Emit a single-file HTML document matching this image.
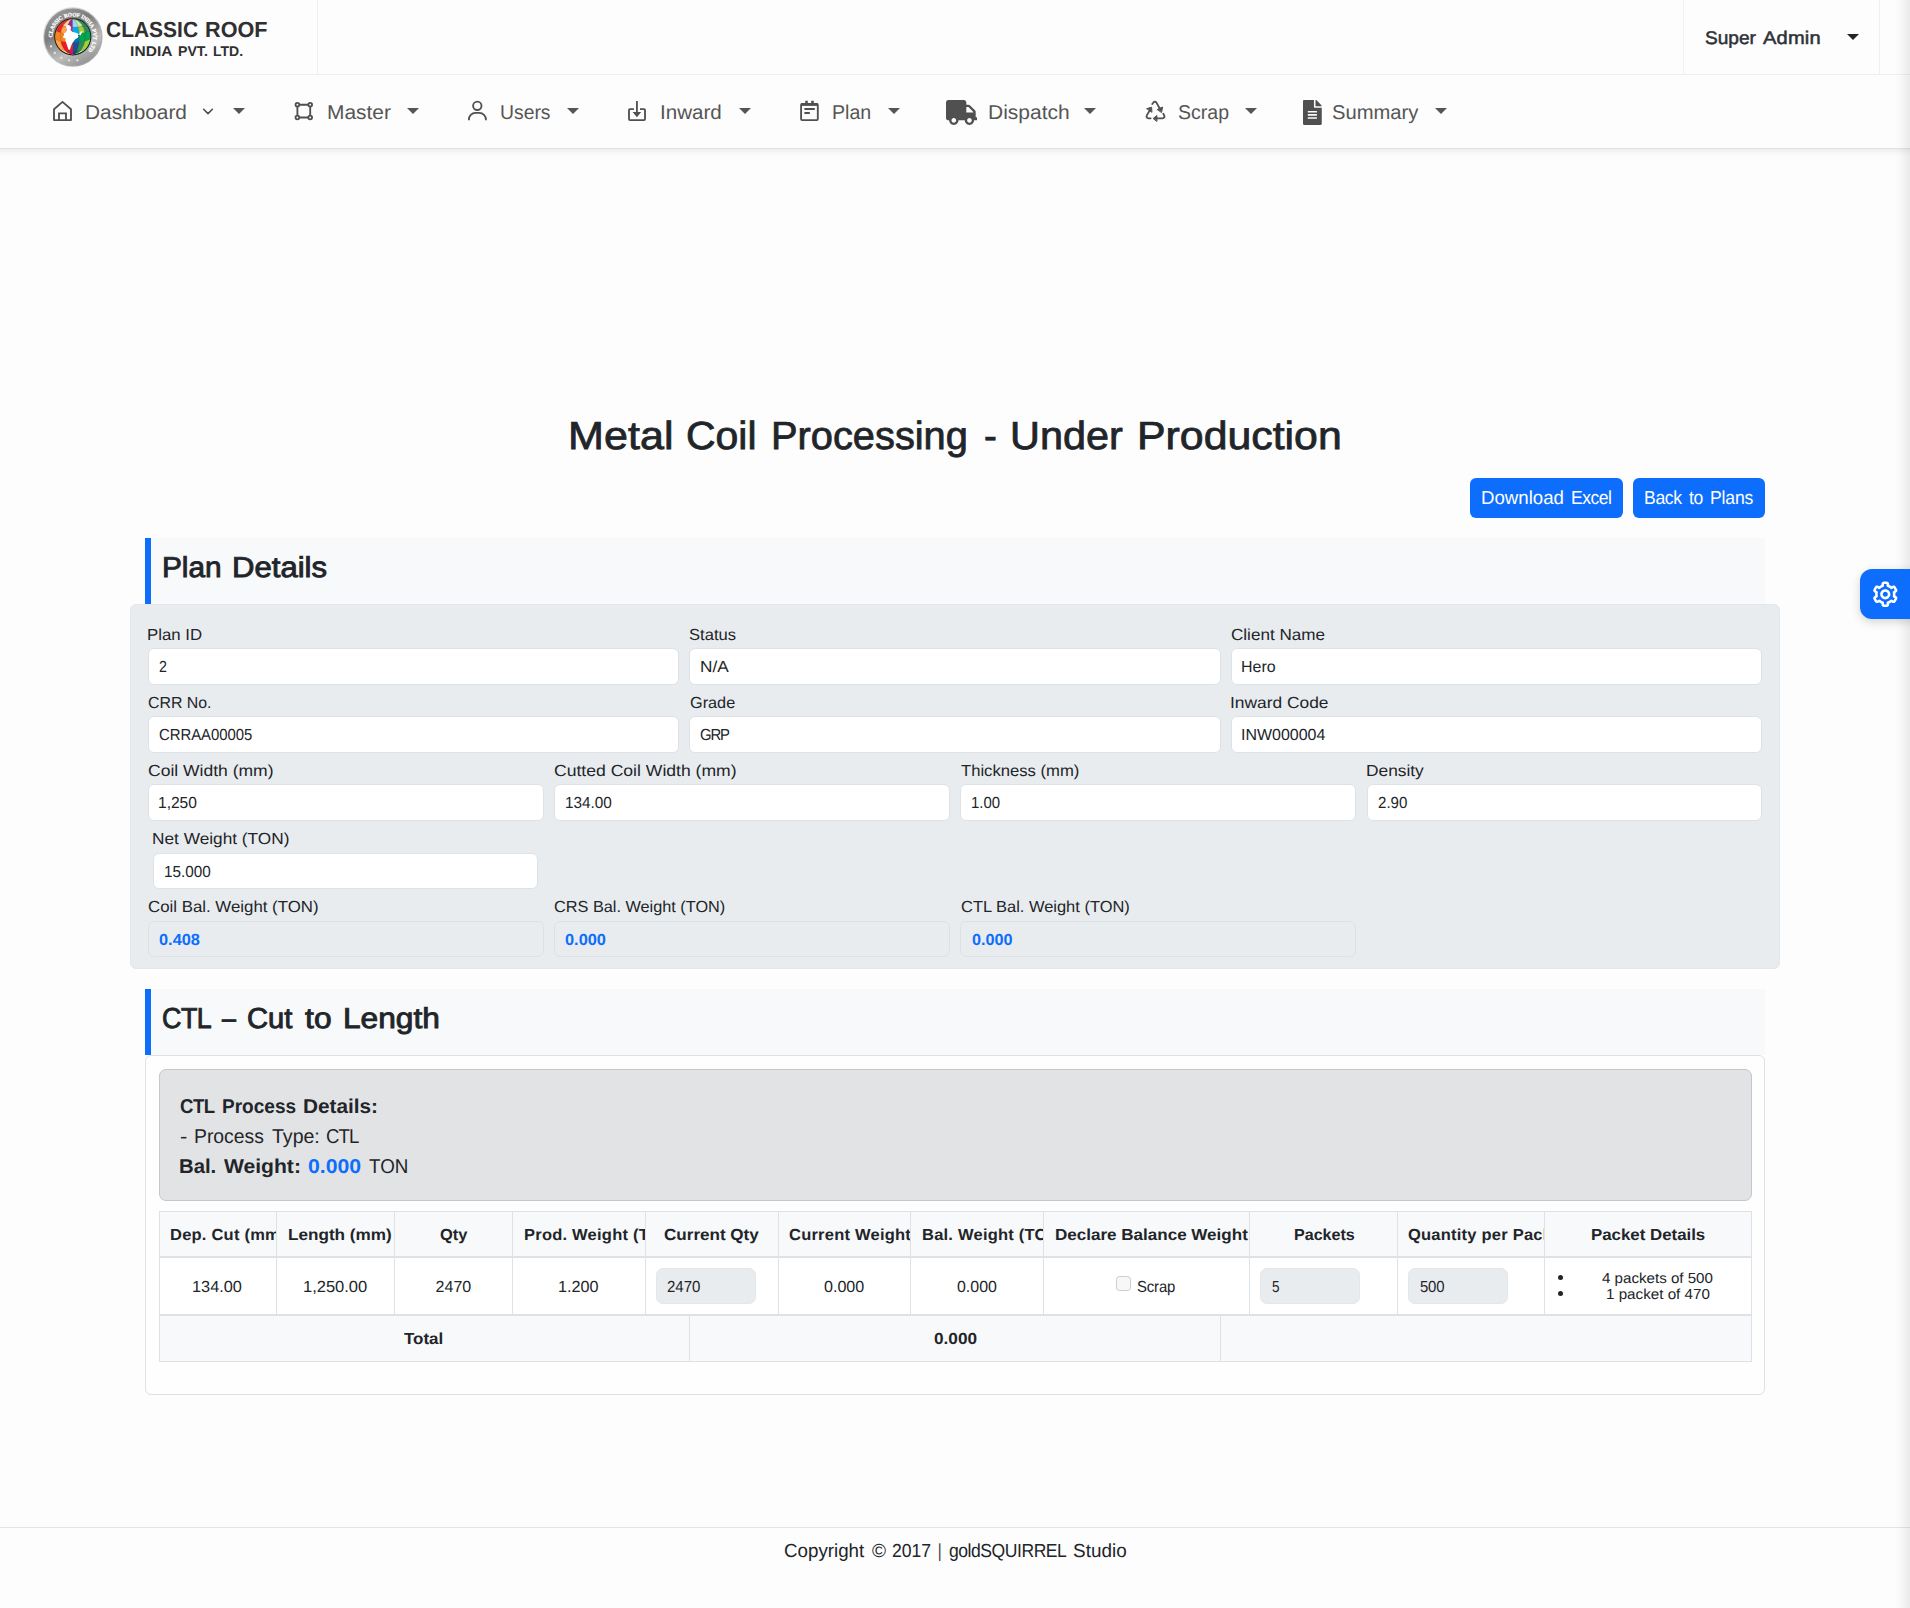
<!DOCTYPE html>
<html lang="en">
<head>
<meta charset="utf-8">
<title>Metal Coil Processing - Under Production</title>
<style>
*{box-sizing:border-box;margin:0;padding:0}
html,body{width:1910px;height:1608px;overflow:hidden;background:#fdfdfd}
body{font-family:"Liberation Sans",sans-serif;color:#212529;position:relative;font-size:15px}
.abs{position:absolute}
.t{position:absolute;white-space:pre;line-height:1;transform-origin:0 0;text-rendering:geometricPrecision}
#topbar{left:0;top:0;width:1910px;height:75px;border-bottom:1px solid #efefef;background:#fdfdfd}
#logoBox{left:0;top:0;width:318px;height:74px;border-right:1px solid #f0f0f0}
#adminBox{left:1683px;top:0;width:197px;height:74px;border-left:1px solid #f0f0f0;border-right:1px solid #f0f0f0}
#nav{left:0;top:75px;width:1910px;height:74px;background:#fdfdfd;border-bottom:1px solid #e2e2e2}
#navsh{left:0;top:149px;width:1910px;height:8px;background:linear-gradient(to bottom,rgba(0,0,0,.055),rgba(0,0,0,.04) 25%,rgba(0,0,0,.015) 60%,rgba(0,0,0,0))}
.caret{position:absolute;width:0;height:0;border-left:6px solid transparent;border-right:6px solid transparent;border-top:6px solid #555;top:108px}
.sechead{left:145px;width:1620px;height:66px;background:#f8f9fa;border-left:6px solid #0d6efd}
.btn{position:absolute;top:478px;height:40px;background:#0d6efd;border-radius:6px}
#panel{left:130px;top:604px;width:1650px;height:365px;background:#e9ecef;border:1px solid #e3e6ea;border-radius:6px}
.inp{position:absolute;height:37px;background:#fff;border:1px solid #dee2e6;border-radius:6px}
.inp.ro{background:#e9ecef;border-color:#dde1e5}
#card{left:145px;top:1055px;width:1620px;height:340px;border:1px solid #dee2e6;border-radius:6px;background:#fefefe}
#alert{left:159px;top:1069px;width:1593px;height:132px;background:#e2e3e5;border:1px solid #c4c8cb;border-radius:7px}
.cell{position:absolute;border-left:1px solid #dee2e6;border-top:1px solid #dee2e6}
.sin{position:absolute;top:1268px;height:36px;width:100px;background:#e9ecef;border:1px solid #e3e6ea;border-radius:7px}
#footer{left:0;top:1527px;width:1910px;height:81px;border-top:1px solid #e4e4e4;background:#fdfdfd}
#gear{left:1860px;top:569px;width:60px;height:50px;background:#0d6efd;border-radius:12px 0 0 12px;box-shadow:0 3px 10px rgba(0,0,0,.17)}
#edge{left:1894px;top:0;width:16px;height:1608px;background:linear-gradient(to right,rgba(0,0,0,0),rgba(0,0,0,.02) 40%,rgba(0,0,0,.075))}
.bul{position:absolute;width:5.6px;height:5.6px;border-radius:50%;background:#212529}

</style>
</head>
<body>
<div id="topbar" class="abs"></div>
<div id="logoBox" class="abs"></div>
<div id="adminBox" class="abs"></div>
<div id="nav" class="abs"></div>
<div id="navsh" class="abs"></div>
<div class="caret" style="left:232.7px"></div>
<div class="caret" style="left:406.8px"></div>
<div class="caret" style="left:566.9px"></div>
<div class="caret" style="left:738.7px"></div>
<div class="caret" style="left:887.8px"></div>
<div class="caret" style="left:1084.1px"></div>
<div class="caret" style="left:1245px"></div>
<div class="caret" style="left:1435.1px"></div>
<div class="caret" style="left:1847px;top:34px;border-top-color:#212529"></div>
<div class="btn" style="left:1470px;width:153px"></div>
<div class="btn" style="left:1633px;width:132px"></div>
<div class="abs sechead" style="top:538px"></div>
<div id="panel" class="abs"></div>
<div class="inp" style="left:148px;top:648px;width:531px"></div>
<div class="inp" style="left:689px;top:648px;width:532px"></div>
<div class="inp" style="left:1231px;top:648px;width:531px"></div>
<div class="inp" style="left:148px;top:716px;width:531px"></div>
<div class="inp" style="left:689px;top:716px;width:532px"></div>
<div class="inp" style="left:1231px;top:716px;width:531px"></div>
<div class="inp" style="left:148px;top:784px;width:396px"></div>
<div class="inp" style="left:554px;top:784px;width:396px"></div>
<div class="inp" style="left:960px;top:784px;width:396px"></div>
<div class="inp" style="left:1367px;top:784px;width:395px"></div>
<div class="inp" style="left:153px;top:853px;width:385px;height:36px"></div>
<div class="inp ro" style="left:148px;top:921px;width:396px;height:36px"></div>
<div class="inp ro" style="left:554px;top:921px;width:396px;height:36px"></div>
<div class="inp ro" style="left:960px;top:921px;width:396px;height:36px"></div>
<div class="abs sechead" style="top:989px"></div>
<div id="card" class="abs"></div>
<div id="alert" class="abs"></div>
<div class="abs" style="left:159px;top:1211px;width:1593px;height:151px;background:#dee2e6"></div>
<div class="abs" style="left:160px;top:1212px;width:116px;height:44px;background:#f8f9fa"></div>
<div class="abs" style="left:160px;top:1258px;width:116px;height:56px;background:#fff"></div>
<div class="abs" style="left:277px;top:1212px;width:117px;height:44px;background:#f8f9fa"></div>
<div class="abs" style="left:277px;top:1258px;width:117px;height:56px;background:#fff"></div>
<div class="abs" style="left:395px;top:1212px;width:117px;height:44px;background:#f8f9fa"></div>
<div class="abs" style="left:395px;top:1258px;width:117px;height:56px;background:#fff"></div>
<div class="abs" style="left:513px;top:1212px;width:132px;height:44px;background:#f8f9fa"></div>
<div class="abs" style="left:513px;top:1258px;width:132px;height:56px;background:#fff"></div>
<div class="abs" style="left:646px;top:1212px;width:132px;height:44px;background:#f8f9fa"></div>
<div class="abs" style="left:646px;top:1258px;width:132px;height:56px;background:#fff"></div>
<div class="abs" style="left:779px;top:1212px;width:131px;height:44px;background:#f8f9fa"></div>
<div class="abs" style="left:779px;top:1258px;width:131px;height:56px;background:#fff"></div>
<div class="abs" style="left:911px;top:1212px;width:132px;height:44px;background:#f8f9fa"></div>
<div class="abs" style="left:911px;top:1258px;width:132px;height:56px;background:#fff"></div>
<div class="abs" style="left:1044px;top:1212px;width:205px;height:44px;background:#f8f9fa"></div>
<div class="abs" style="left:1044px;top:1258px;width:205px;height:56px;background:#fff"></div>
<div class="abs" style="left:1250px;top:1212px;width:147px;height:44px;background:#f8f9fa"></div>
<div class="abs" style="left:1250px;top:1258px;width:147px;height:56px;background:#fff"></div>
<div class="abs" style="left:1398px;top:1212px;width:146px;height:44px;background:#f8f9fa"></div>
<div class="abs" style="left:1398px;top:1258px;width:146px;height:56px;background:#fff"></div>
<div class="abs" style="left:1545px;top:1212px;width:206px;height:44px;background:#f8f9fa"></div>
<div class="abs" style="left:1545px;top:1258px;width:206px;height:56px;background:#fff"></div>
<div class="abs" style="left:160px;top:1316px;width:529px;height:45px;background:#f8f9fa"></div>
<div class="abs" style="left:690px;top:1316px;width:530px;height:45px;background:#f8f9fa"></div>
<div class="abs" style="left:1221px;top:1316px;width:530px;height:45px;background:#f8f9fa"></div>
<div class="sin" style="left:656.2px"></div>
<div class="sin" style="left:1260.2px"></div>
<div class="sin" style="left:1408px"></div>
<div class="abs" style="left:1116px;top:1276px;width:15px;height:15px;border:1px solid #cdcdcd;border-radius:3.5px;background:#f7f7f7"></div>
<div class="bul" style="left:1557.7px;top:1274.8px"></div><div class="bul" style="left:1557.7px;top:1290.7px"></div>
<div id="footer" class="abs"></div>
<div id="edge" class="abs"></div>
<div id="gear" class="abs"></div>

<svg class="abs" style="left:43px;top:7px" width="60" height="60" viewBox="0 0 60 60">
<defs>
<linearGradient id="lg1" x1="0.2" y1="0" x2="0.75" y2="1"><stop offset="0" stop-color="#9a9a9a"/><stop offset=".35" stop-color="#7c7c7c"/><stop offset=".7" stop-color="#bdbdbd"/><stop offset="1" stop-color="#8e8e8e"/></linearGradient>
<linearGradient id="lg2" x1="0" y1="0" x2="1" y2="1"><stop offset="0" stop-color="#e6e6e6"/><stop offset="1" stop-color="#9c9c9c"/></linearGradient>
<clipPath id="gc"><circle cx="29.8" cy="29.8" r="17.6"/></clipPath>
<path id="arc" d="M 9.3 30.4 A 20.5 20.5 0 1 1 44.3 44.3"/>
</defs>
<circle cx="29.8" cy="30" r="29.8" fill="url(#lg2)"/>
<circle cx="29.8" cy="30" r="28.6" fill="url(#lg1)"/>
<circle cx="29.8" cy="29.8" r="18.6" fill="#1c1c1c"/>
<g clip-path="url(#gc)">
<rect x="10" y="10" width="20" height="40" fill="#f58220"/>
<rect x="30" y="10" width="20" height="40" fill="#00a651"/>
<defs>
<clipPath id="e0"><ellipse cx="29.8" cy="29.8" rx="17.6" ry="17.6"/></clipPath>
<clipPath id="e1"><ellipse cx="29.8" cy="29.8" rx="12.4" ry="17.6"/></clipPath>
<clipPath id="e2"><ellipse cx="29.8" cy="29.8" rx="6.5" ry="17.6"/></clipPath>
</defs>
<g clip-path="url(#e0)">
<path d="M11.8 4.6L13.6 5.2L15.4 5.8L17.2 6.3L19.0 6.8L20.8 7.1L22.6 7.5L24.4 7.7L26.2 7.9L28.0 8.0L29.8 8.0L29.8 20.3L28.0 20.3L26.2 20.2L24.4 20.0L22.6 19.8L20.8 19.4L19.0 19.1L17.2 18.6L15.4 18.1L13.6 17.5L11.8 16.9Z" fill="#e8262a"/>
<path d="M29.8 8.0L31.6 8.0L33.4 7.9L35.2 7.7L37.0 7.5L38.8 7.1L40.6 6.8L42.4 6.3L44.2 5.8L46.0 5.2L47.8 4.6L47.8 16.9L46.0 17.5L44.2 18.1L42.4 18.6L40.6 19.1L38.8 19.4L37.0 19.8L35.2 20.0L33.4 20.2L31.6 20.3L29.8 20.3Z" fill="#2e8b57"/>
<path d="M11.8 16.9L13.6 17.5L15.4 18.1L17.2 18.6L19.0 19.1L20.8 19.4L22.6 19.8L24.4 20.0L26.2 20.2L28.0 20.3L29.8 20.3L29.8 27.2L28.0 27.2L26.2 27.1L24.4 26.9L22.6 26.7L20.8 26.3L19.0 26.0L17.2 25.5L15.4 25.0L13.6 24.4L11.8 23.8Z" fill="#e8262a"/>
<path d="M29.8 20.3L31.6 20.3L33.4 20.2L35.2 20.0L37.0 19.8L38.8 19.4L40.6 19.1L42.4 18.6L44.2 18.1L46.0 17.5L47.8 16.9L47.8 23.8L46.0 24.4L44.2 25.0L42.4 25.5L40.6 26.0L38.8 26.3L37.0 26.7L35.2 26.9L33.4 27.1L31.6 27.2L29.8 27.2Z" fill="#2e8b57"/>
<path d="M11.8 23.8L13.6 24.4L15.4 25.0L17.2 25.5L19.0 26.0L20.8 26.3L22.6 26.7L24.4 26.9L26.2 27.1L28.0 27.2L29.8 27.2L29.8 35.6L28.0 35.6L26.2 35.5L24.4 35.3L22.6 35.1L20.8 34.7L19.0 34.4L17.2 33.9L15.4 33.4L13.6 32.8L11.8 32.2Z" fill="#f58220"/>
<path d="M29.8 27.2L31.6 27.2L33.4 27.1L35.2 26.9L37.0 26.7L38.8 26.3L40.6 26.0L42.4 25.5L44.2 25.0L46.0 24.4L47.8 23.8L47.8 32.2L46.0 32.8L44.2 33.4L42.4 33.9L40.6 34.4L38.8 34.7L37.0 35.1L35.2 35.3L33.4 35.5L31.6 35.6L29.8 35.6Z" fill="#00a651"/>
<path d="M11.8 32.2L13.6 32.8L15.4 33.4L17.2 33.9L19.0 34.4L20.8 34.7L22.6 35.1L24.4 35.3L26.2 35.5L28.0 35.6L29.8 35.6L29.8 44.2L28.0 44.2L26.2 44.1L24.4 43.9L22.6 43.7L20.8 43.3L19.0 43.0L17.2 42.5L15.4 42.0L13.6 41.4L11.8 40.8Z" fill="#f9a64a"/>
<path d="M29.8 35.6L31.6 35.6L33.4 35.5L35.2 35.3L37.0 35.1L38.8 34.7L40.6 34.4L42.4 33.9L44.2 33.4L46.0 32.8L47.8 32.2L47.8 40.8L46.0 41.4L44.2 42.0L42.4 42.5L40.6 43.0L38.8 43.3L37.0 43.7L35.2 43.9L33.4 44.1L31.6 44.2L29.8 44.2Z" fill="#a6ce39"/>
<path d="M11.8 40.8L13.6 41.4L15.4 42.0L17.2 42.5L19.0 43.0L20.8 43.3L22.6 43.7L24.4 43.9L26.2 44.1L28.0 44.2L29.8 44.2L29.8 54.0L28.0 54.0L26.2 53.9L24.4 53.7L22.6 53.5L20.8 53.1L19.0 52.8L17.2 52.3L15.4 51.8L13.6 51.2L11.8 50.6Z" fill="#fbd19b"/>
<path d="M29.8 44.2L31.6 44.2L33.4 44.1L35.2 43.9L37.0 43.7L38.8 43.3L40.6 43.0L42.4 42.5L44.2 42.0L46.0 41.4L47.8 40.8L47.8 50.6L46.0 51.2L44.2 51.8L42.4 52.3L40.6 52.8L38.8 53.1L37.0 53.5L35.2 53.7L33.4 53.9L31.6 54.0L29.8 54.0Z" fill="#cfe59a"/>
</g>
<g clip-path="url(#e1)">
<path d="M11.8 4.6L13.6 5.2L15.4 5.8L17.2 6.3L19.0 6.8L20.8 7.1L22.6 7.5L24.4 7.7L26.2 7.9L28.0 8.0L29.8 8.0L29.8 20.3L28.0 20.3L26.2 20.2L24.4 20.0L22.6 19.8L20.8 19.4L19.0 19.1L17.2 18.6L15.4 18.1L13.6 17.5L11.8 16.9Z" fill="#fcd5a4"/>
<path d="M29.8 8.0L31.6 8.0L33.4 7.9L35.2 7.7L37.0 7.5L38.8 7.1L40.6 6.8L42.4 6.3L44.2 5.8L46.0 5.2L47.8 4.6L47.8 16.9L46.0 17.5L44.2 18.1L42.4 18.6L40.6 19.1L38.8 19.4L37.0 19.8L35.2 20.0L33.4 20.2L31.6 20.3L29.8 20.3Z" fill="#cfe59a"/>
<path d="M11.8 16.9L13.6 17.5L15.4 18.1L17.2 18.6L19.0 19.1L20.8 19.4L22.6 19.8L24.4 20.0L26.2 20.2L28.0 20.3L29.8 20.3L29.8 27.2L28.0 27.2L26.2 27.1L24.4 26.9L22.6 26.7L20.8 26.3L19.0 26.0L17.2 25.5L15.4 25.0L13.6 24.4L11.8 23.8Z" fill="#f9a64a"/>
<path d="M29.8 20.3L31.6 20.3L33.4 20.2L35.2 20.0L37.0 19.8L38.8 19.4L40.6 19.1L42.4 18.6L44.2 18.1L46.0 17.5L47.8 16.9L47.8 23.8L46.0 24.4L44.2 25.0L42.4 25.5L40.6 26.0L38.8 26.3L37.0 26.7L35.2 26.9L33.4 27.1L31.6 27.2L29.8 27.2Z" fill="#a6ce39"/>
<path d="M11.8 23.8L13.6 24.4L15.4 25.0L17.2 25.5L19.0 26.0L20.8 26.3L22.6 26.7L24.4 26.9L26.2 27.1L28.0 27.2L29.8 27.2L29.8 35.6L28.0 35.6L26.2 35.5L24.4 35.3L22.6 35.1L20.8 34.7L19.0 34.4L17.2 33.9L15.4 33.4L13.6 32.8L11.8 32.2Z" fill="#f58220"/>
<path d="M29.8 27.2L31.6 27.2L33.4 27.1L35.2 26.9L37.0 26.7L38.8 26.3L40.6 26.0L42.4 25.5L44.2 25.0L46.0 24.4L47.8 23.8L47.8 32.2L46.0 32.8L44.2 33.4L42.4 33.9L40.6 34.4L38.8 34.7L37.0 35.1L35.2 35.3L33.4 35.5L31.6 35.6L29.8 35.6Z" fill="#00a651"/>
<path d="M11.8 32.2L13.6 32.8L15.4 33.4L17.2 33.9L19.0 34.4L20.8 34.7L22.6 35.1L24.4 35.3L26.2 35.5L28.0 35.6L29.8 35.6L29.8 44.2L28.0 44.2L26.2 44.1L24.4 43.9L22.6 43.7L20.8 43.3L19.0 43.0L17.2 42.5L15.4 42.0L13.6 41.4L11.8 40.8Z" fill="#ed1c24"/>
<path d="M29.8 35.6L31.6 35.6L33.4 35.5L35.2 35.3L37.0 35.1L38.8 34.7L40.6 34.4L42.4 33.9L44.2 33.4L46.0 32.8L47.8 32.2L47.8 40.8L46.0 41.4L44.2 42.0L42.4 42.5L40.6 43.0L38.8 43.3L37.0 43.7L35.2 43.9L33.4 44.1L31.6 44.2L29.8 44.2Z" fill="#2e8b57"/>
<path d="M11.8 40.8L13.6 41.4L15.4 42.0L17.2 42.5L19.0 43.0L20.8 43.3L22.6 43.7L24.4 43.9L26.2 44.1L28.0 44.2L29.8 44.2L29.8 54.0L28.0 54.0L26.2 53.9L24.4 53.7L22.6 53.5L20.8 53.1L19.0 52.8L17.2 52.3L15.4 51.8L13.6 51.2L11.8 50.6Z" fill="#c1272d"/>
<path d="M29.8 44.2L31.6 44.2L33.4 44.1L35.2 43.9L37.0 43.7L38.8 43.3L40.6 43.0L42.4 42.5L44.2 42.0L46.0 41.4L47.8 40.8L47.8 50.6L46.0 51.2L44.2 51.8L42.4 52.3L40.6 52.8L38.8 53.1L37.0 53.5L35.2 53.7L33.4 53.9L31.6 54.0L29.8 54.0Z" fill="#1f7a47"/>
</g>
<g clip-path="url(#e2)">
<path d="M11.8 4.6L13.6 5.2L15.4 5.8L17.2 6.3L19.0 6.8L20.8 7.1L22.6 7.5L24.4 7.7L26.2 7.9L28.0 8.0L29.8 8.0L29.8 20.3L28.0 20.3L26.2 20.2L24.4 20.0L22.6 19.8L20.8 19.4L19.0 19.1L17.2 18.6L15.4 18.1L13.6 17.5L11.8 16.9Z" fill="#92278f"/>
<path d="M29.8 8.0L31.6 8.0L33.4 7.9L35.2 7.7L37.0 7.5L38.8 7.1L40.6 6.8L42.4 6.3L44.2 5.8L46.0 5.2L47.8 4.6L47.8 16.9L46.0 17.5L44.2 18.1L42.4 18.6L40.6 19.1L38.8 19.4L37.0 19.8L35.2 20.0L33.4 20.2L31.6 20.3L29.8 20.3Z" fill="#8fd8f8"/>
<path d="M11.8 16.9L13.6 17.5L15.4 18.1L17.2 18.6L19.0 19.1L20.8 19.4L22.6 19.8L24.4 20.0L26.2 20.2L28.0 20.3L29.8 20.3L29.8 27.2L28.0 27.2L26.2 27.1L24.4 26.9L22.6 26.7L20.8 26.3L19.0 26.0L17.2 25.5L15.4 25.0L13.6 24.4L11.8 23.8Z" fill="#a8309a"/>
<path d="M29.8 20.3L31.6 20.3L33.4 20.2L35.2 20.0L37.0 19.8L38.8 19.4L40.6 19.1L42.4 18.6L44.2 18.1L46.0 17.5L47.8 16.9L47.8 23.8L46.0 24.4L44.2 25.0L42.4 25.5L40.6 26.0L38.8 26.3L37.0 26.7L35.2 26.9L33.4 27.1L31.6 27.2L29.8 27.2Z" fill="#00aeef"/>
<path d="M11.8 23.8L13.6 24.4L15.4 25.0L17.2 25.5L19.0 26.0L20.8 26.3L22.6 26.7L24.4 26.9L26.2 27.1L28.0 27.2L29.8 27.2L29.8 35.6L28.0 35.6L26.2 35.5L24.4 35.3L22.6 35.1L20.8 34.7L19.0 34.4L17.2 33.9L15.4 33.4L13.6 32.8L11.8 32.2Z" fill="#ffffff"/>
<path d="M29.8 27.2L31.6 27.2L33.4 27.1L35.2 26.9L37.0 26.7L38.8 26.3L40.6 26.0L42.4 25.5L44.2 25.0L46.0 24.4L47.8 23.8L47.8 32.2L46.0 32.8L44.2 33.4L42.4 33.9L40.6 34.4L38.8 34.7L37.0 35.1L35.2 35.3L33.4 35.5L31.6 35.6L29.8 35.6Z" fill="#0072bc"/>
<path d="M11.8 32.2L13.6 32.8L15.4 33.4L17.2 33.9L19.0 34.4L20.8 34.7L22.6 35.1L24.4 35.3L26.2 35.5L28.0 35.6L29.8 35.6L29.8 44.2L28.0 44.2L26.2 44.1L24.4 43.9L22.6 43.7L20.8 43.3L19.0 43.0L17.2 42.5L15.4 42.0L13.6 41.4L11.8 40.8Z" fill="#ed1c24"/>
<path d="M29.8 35.6L31.6 35.6L33.4 35.5L35.2 35.3L37.0 35.1L38.8 34.7L40.6 34.4L42.4 33.9L44.2 33.4L46.0 32.8L47.8 32.2L47.8 40.8L46.0 41.4L44.2 42.0L42.4 42.5L40.6 43.0L38.8 43.3L37.0 43.7L35.2 43.9L33.4 44.1L31.6 44.2L29.8 44.2Z" fill="#1b4f9c"/>
<path d="M11.8 40.8L13.6 41.4L15.4 42.0L17.2 42.5L19.0 43.0L20.8 43.3L22.6 43.7L24.4 43.9L26.2 44.1L28.0 44.2L29.8 44.2L29.8 54.0L28.0 54.0L26.2 53.9L24.4 53.7L22.6 53.5L20.8 53.1L19.0 52.8L17.2 52.3L15.4 51.8L13.6 51.2L11.8 50.6Z" fill="#ec008c"/>
<path d="M29.8 44.2L31.6 44.2L33.4 44.1L35.2 43.9L37.0 43.7L38.8 43.3L40.6 43.0L42.4 42.5L44.2 42.0L46.0 41.4L47.8 40.8L47.8 50.6L46.0 51.2L44.2 51.8L42.4 52.3L40.6 52.8L38.8 53.1L37.0 53.5L35.2 53.7L33.4 53.9L31.6 54.0L29.8 54.0Z" fill="#2e3192"/>
</g>
<ellipse cx="29.8" cy="29.8" rx="12.4" ry="17.6" fill="none" stroke="#3a2a1a" stroke-opacity=".45" stroke-width=".35"/>
<ellipse cx="29.8" cy="29.8" rx="6.5" ry="17.6" fill="none" stroke="#3a2a1a" stroke-opacity=".45" stroke-width=".35"/>
<path d="M11.8 16.9L13.6 17.5L15.4 18.1L17.2 18.6L19.0 19.1L20.8 19.4L22.6 19.8L24.4 20.0L26.2 20.2L28.0 20.3L29.8 20.3L31.6 20.3L33.4 20.2L35.2 20.0L37.0 19.8L38.8 19.4L40.6 19.1L42.4 18.6L44.2 18.1L46.0 17.5L47.8 16.9" fill="none" stroke="#3a2a1a" stroke-opacity=".45" stroke-width=".35"/>
<path d="M11.8 23.8L13.6 24.4L15.4 25.0L17.2 25.5L19.0 26.0L20.8 26.3L22.6 26.7L24.4 26.9L26.2 27.1L28.0 27.2L29.8 27.2L31.6 27.2L33.4 27.1L35.2 26.9L37.0 26.7L38.8 26.3L40.6 26.0L42.4 25.5L44.2 25.0L46.0 24.4L47.8 23.8" fill="none" stroke="#3a2a1a" stroke-opacity=".45" stroke-width=".35"/>
<path d="M11.8 32.2L13.6 32.8L15.4 33.4L17.2 33.9L19.0 34.4L20.8 34.7L22.6 35.1L24.4 35.3L26.2 35.5L28.0 35.6L29.8 35.6L31.6 35.6L33.4 35.5L35.2 35.3L37.0 35.1L38.8 34.7L40.6 34.4L42.4 33.9L44.2 33.4L46.0 32.8L47.8 32.2" fill="none" stroke="#3a2a1a" stroke-opacity=".45" stroke-width=".35"/>
<path d="M11.8 40.8L13.6 41.4L15.4 42.0L17.2 42.5L19.0 43.0L20.8 43.3L22.6 43.7L24.4 43.9L26.2 44.1L28.0 44.2L29.8 44.2L31.6 44.2L33.4 44.1L35.2 43.9L37.0 43.7L38.8 43.3L40.6 43.0L42.4 42.5L44.2 42.0L46.0 41.4L47.8 40.8" fill="none" stroke="#3a2a1a" stroke-opacity=".45" stroke-width=".35"/>
</g>
<text font-family="Liberation Serif,serif" font-weight="700" font-size="5.5" fill="#fff" stroke="#fff" stroke-width=".22" letter-spacing="-0.2" word-spacing="0.5"><textPath href="#arc">CLASSIC ROOF INDIA PVT LTD</textPath></text>
<circle cx="8.06" cy="39.41" r="1.15" fill="#e9e9e9"/>
<circle cx="11.76" cy="46.02" r="1.15" fill="#e9e9e9"/>
<circle cx="18.29" cy="50.81" r="1.15" fill="#e9e9e9"/>
<circle cx="26.13" cy="53.34" r="1.15" fill="#e9e9e9"/>
<circle cx="34.40" cy="53.34" r="1.15" fill="#e9e9e9"/>
<path d="M25.47 17.99L23.52 18.51L23.30 20.69L23.95 22.86L22.86 25.47L20.69 26.35L21.12 28.52L19.90 29.48L20.69 31.22L22.86 31.13L22.34 32.96L23.30 36.36L24.82 40.71L25.82 42.89L27.00 42.54L28.09 38.97L29.39 35.92L30.70 34.18L32.44 32.00L34.18 31.13L35.57 29.83L34.83 28.09L35.92 27.30L37.45 28.61L38.97 25.47L39.49 23.91L37.88 24.60L36.01 26.95L34.18 26.35L32.00 25.56L29.39 25.04L27.43 22.86L28.17 21.12L27.30 18.77Z" fill="#fff"/>
</svg>
<svg class="abs" style="left:0;top:75px" width="1910" height="73" viewBox="0 75 1910 73" fill="none" stroke="#505050" stroke-width="1.85" stroke-linecap="round" stroke-linejoin="round">
<!-- home -->
<path d="M54 120.1V109.3L62.5 101.9L71 109.3V120.1Z"/>
<path d="M59 120V113.4H66V120" stroke-linejoin="miter"/>
<!-- master -->
<circle cx="297.4" cy="104.7" r="1.85"/><circle cx="310.2" cy="104.7" r="1.85"/><circle cx="297.4" cy="117.5" r="1.85"/><circle cx="310.2" cy="117.5" r="1.85"/>
<path d="M299.5 104.7H308.1M299.5 117.5H308.1M297.4 106.8V115.4M310.2 106.8V115.4" stroke-linecap="butt"/>
<!-- user -->
<circle cx="477.3" cy="105.8" r="4.2"/>
<path d="M468.9 120.3V119.4A6.5 6.5 0 0 1 475.4 112.9H479.4A6.5 6.5 0 0 1 485.9 119.4V120.3" stroke-linecap="butt"/>
<!-- inward -->
<path d="M633.9 109.1H630A1 1 0 0 0 629 110.1V119.1A1 1 0 0 0 630 120.1H644A1 1 0 0 0 645 119.1V110.1A1 1 0 0 0 644 109.1H640" stroke-linecap="butt"/>
<path d="M636.9 101V112.5" stroke-linecap="butt"/>
<path d="M632.6 112.1H641.2L636.9 117.3Z" fill="#505050" stroke="none"/>
<!-- plan -->
<rect x="801.1" y="104" width="16.7" height="16.1" rx="1"/>
<path d="M801.1 104.6H817.8" stroke-width="2.6" stroke-linecap="butt"/>
<path d="M806.5 100.7V104M812.5 100.7V104" stroke-width="2.6" stroke-linecap="butt"/>
<path d="M804.4 108.9H814.8M804.4 113H809.8" stroke-width="2" stroke-linecap="butt"/>
<!-- scrap -->
<path d="M1152.3 104.1L1153.4 102.4A1.7 1.7 0 0 1 1156.3 102.4L1160.3 109.5" />
<path d="M1157.6 109.4L1162.6 107L1161.6 112.2Z" fill="#505050" stroke-width="1"/>
<path d="M1150.6 118.3H1148.4A1.9 1.9 0 0 1 1146.8 115.4L1150.2 109.6" />
<path d="M1147 108.6L1151.6 107.2L1151.9 111.9Z" fill="#505050" stroke-width="1"/>
<path d="M1163.3 113.8L1164.2 115.4A1.9 1.9 0 0 1 1162.6 118.3H1156.8" />
<path d="M1153.4 118.3L1156.9 115.5V121.1Z" fill="#505050" stroke-width="1"/>
</svg>
<svg class="abs" style="left:945.9px;top:100.1px" width="31.25" height="25" viewBox="0 0 640 512"><path fill="#505050" d="M624 352h-16V243.900c0-12.700-5.100-24.900-14.100-33.900L494 110.100c-9-9-21.200-14.100-33.900-14.100H416V48c0-26.500-21.500-48-48-48H48C21.500 0 0 21.500 0 48v320c0 26.500 21.500 48 48 48h16c0 53 43 96 96 96s96-43 96-96h128c0 53 43 96 96 96s96-43 96-96h48c8.800 0 16-7.200 16-16v-32c0-8.800-7.200-16-16-16zM160 464c-26.500 0-48-21.500-48-48s21.500-48 48-48 48 21.500 48 48-21.500 48-48 48zm320 0c-26.500 0-48-21.500-48-48s21.500-48 48-48 48 21.500 48 48-21.500 48-48 48zm80-208H416V144h44.100l99.900 99.900V256z"/></svg>
<svg class="abs" style="left:1303.2px;top:100.1px" width="18.75" height="25" viewBox="0 0 384 512"><path fill="#505050" d="M224 136V0H24C10.700 0 0 10.700 0 24v464c0 13.300 10.700 24 24 24h336c13.300 0 24-10.700 24-24V160H248c-13.200 0-24-10.800-24-24zm64 236c0 6.600-5.400 12-12 12H108c-6.600 0-12-5.400-12-12v-8c0-6.600 5.400-12 12-12h168c6.600 0 12 5.400 12 12v8zm0-64c0 6.600-5.400 12-12 12H108c-6.600 0-12-5.400-12-12v-8c0-6.600 5.400-12 12-12h168c6.600 0 12 5.400 12 12v8zm0-72v8c0 6.600-5.400 12-12 12H108c-6.600 0-12-5.400-12-12v-8c0-6.600 5.400-12 12-12h168c6.600 0 12 5.400 12 12zm96-114.100v6.100H256V0h6.100c6.400 0 12.500 2.500 17 7l97.900 98c4.500 4.500 7 10.600 7 16.900z"/></svg>
<!-- chevron after Dashboard -->
<svg class="abs" style="left:200px;top:104px" width="16" height="14" viewBox="200 104 16 14" fill="none" stroke="#505050" stroke-width="1.6" stroke-linecap="round" stroke-linejoin="round"><path d="M203.6 109.3L208 113.6L212.4 109.3"/></svg>
<!-- gear -->
<svg class="abs" style="left:1869.6px;top:578.8px" width="30.6" height="30.6" viewBox="0 0 24 24" fill="#fff"><path d="M12 16c2.206 0 4-1.794 4-4s-1.794-4-4-4-4 1.794-4 4 1.794 4 4 4zm0-6c1.084 0 2 .916 2 2s-.916 2-2 2-2-.916-2-2 .916-2 2-2z"/><path d="m2.845 16.136 1 1.730c.531.917 1.809 1.261 2.730.730l.529-.306A8.100 8.100 0 0 0 9 19.402V20c0 1.103.897 2 2 2h2c1.103 0 2-.897 2-2v-.598a8.132 8.132 0 0 0 1.896-1.111l.529.306c.923.530 2.198.188 2.731-.731l.999-1.729a2.001 2.001 0 0 0-.731-2.732l-.505-.292a7.718 7.718 0 0 0 0-2.224l.505-.292a2.002 2.002 0 0 0 .731-2.732l-.999-1.729c-.531-.920-1.808-1.265-2.731-.732l-.529.306A8.100 8.100 0 0 0 15 4.598V4c0-1.103-.897-2-2-2h-2c-1.103 0-2 .897-2 2v.598a8.132 8.132 0 0 0-1.896 1.111l-.529-.306c-.924-.531-2.200-.187-2.731.732l-.999 1.729a2.001 2.001 0 0 0 .731 2.732l.505.292a7.683 7.683 0 0 0 0 2.223l-.505.292a2.003 2.003 0 0 0-.731 2.733zm3.326-2.758A5.703 5.703 0 0 1 6 12c0-.462.058-.926.170-1.378a.999.999 0 0 0-.470-1.108l-1.123-.650.998-1.729 1.145.662a.997.997 0 0 0 1.188-.142 6.071 6.071 0 0 1 2.384-1.399A1 1 0 0 0 11 5.300V4h2v1.300a1 1 0 0 0 .708.956 6.083 6.083 0 0 1 2.384 1.399.999.999 0 0 0 1.188.142l1.144-.661 1 1.729-1.124.649a1 1 0 0 0-.470 1.108c.112.452.170.916.170 1.378 0 .461-.058.925-.171 1.378a1 1 0 0 0 .471 1.108l1.123.649-.998 1.729-1.145-.661a.996.996 0 0 0-1.188.142 6.071 6.071 0 0 1-2.384 1.399A1 1 0 0 0 13 18.700l.002 1.300H11v-1.300a1 1 0 0 0-.708-.956 6.083 6.083 0 0 1-2.384-1.399.992.992 0 0 0-1.188-.141l-1.144.662-1-1.729 1.124-.651a1 1 0 0 0 .471-1.108z"/></svg>

<span class="t" style="left:105.90px;top:19.00px;font-size:21.8px;color:#303030;letter-spacing:0.000px;transform:scaleX(0.9621);font-weight:700;">CLASSIC</span>
<span class="t" style="left:204.61px;top:19.00px;font-size:21.8px;color:#303030;letter-spacing:0.000px;transform:scaleX(0.9935);font-weight:700;">ROOF</span>
<span class="t" style="left:130.00px;top:44.00px;font-size:14.1px;color:#303030;letter-spacing:0.068px;transform:scaleX(1.1000);font-weight:700;">INDIA</span>
<span class="t" style="left:177.60px;top:44.00px;font-size:14.1px;color:#303030;letter-spacing:-0.000px;transform:scaleX(1.0034);font-weight:700;">PVT.</span>
<span class="t" style="left:213.00px;top:44.00px;font-size:14.1px;color:#303030;letter-spacing:0.000px;transform:scaleX(0.9933);font-weight:700;">LTD.</span>
<span class="t" style="left:1704.80px;top:29.00px;font-size:18.3px;color:#2e3237;letter-spacing:0.000px;transform:scaleX(1.0449);-webkit-text-stroke:0.5px #2e3237;">Super</span>
<span class="t" style="left:1763.00px;top:29.00px;font-size:18.3px;color:#2e3237;letter-spacing:0.136px;transform:scaleX(1.1000);-webkit-text-stroke:0.5px #2e3237;">Admin</span>
<span class="t" style="left:85.36px;top:103.00px;font-size:20.0px;color:#555;letter-spacing:0.000px;transform:scaleX(1.0417);">Dashboard</span>
<span class="t" style="left:326.95px;top:103.00px;font-size:20.0px;color:#555;letter-spacing:0.000px;transform:scaleX(1.0467);">Master</span>
<span class="t" style="left:500.03px;top:103.00px;font-size:20.0px;color:#555;letter-spacing:0.000px;transform:scaleX(0.9667);">Users</span>
<span class="t" style="left:660.27px;top:103.00px;font-size:20.0px;color:#555;letter-spacing:0.000px;transform:scaleX(1.0288);">Inward</span>
<span class="t" style="left:832.22px;top:103.00px;font-size:20.0px;color:#555;letter-spacing:0.000px;transform:scaleX(0.9795);">Plan</span>
<span class="t" style="left:987.85px;top:103.00px;font-size:20.0px;color:#555;letter-spacing:0.000px;transform:scaleX(1.0500);">Dispatch</span>
<span class="t" style="left:1177.72px;top:103.00px;font-size:20.0px;color:#555;letter-spacing:0.000px;transform:scaleX(0.9765);">Scrap</span>
<span class="t" style="left:1332.29px;top:103.00px;font-size:20.0px;color:#555;letter-spacing:0.000px;transform:scaleX(1.0094);">Summary</span>
<span class="t" style="left:567.80px;top:417.00px;font-size:39.2px;color:#212529;letter-spacing:0.045px;transform:scaleX(1.1000);-webkit-text-stroke:0.8px #212529;">Metal</span>
<span class="t" style="left:686.26px;top:417.00px;font-size:39.2px;color:#212529;letter-spacing:0.000px;transform:scaleX(1.0446);-webkit-text-stroke:0.8px #212529;">Coil</span>
<span class="t" style="left:771.17px;top:417.00px;font-size:39.2px;color:#212529;letter-spacing:0.000px;transform:scaleX(1.0157);-webkit-text-stroke:0.8px #212529;">Processing</span>
<span class="t" style="left:983.62px;top:417.00px;font-size:39.2px;color:#212529;letter-spacing:0.000px;transform:scaleX(0.9818);-webkit-text-stroke:0.8px #212529;">-</span>
<span class="t" style="left:1010.29px;top:417.00px;font-size:39.2px;color:#212529;letter-spacing:0.000px;transform:scaleX(1.0571);-webkit-text-stroke:0.8px #212529;">Under</span>
<span class="t" style="left:1137.31px;top:417.00px;font-size:39.2px;color:#212529;letter-spacing:-0.000px;transform:scaleX(1.0929);-webkit-text-stroke:0.8px #212529;">Production</span>
<span class="t" style="left:1481.31px;top:490.00px;font-size:18.9px;color:#fff;letter-spacing:0.000px;transform:scaleX(0.9867);">Download</span>
<span class="t" style="left:1570.77px;top:490.00px;font-size:18.9px;color:#fff;letter-spacing:-0.524px;transform:scaleX(0.9300);">Excel</span>
<span class="t" style="left:1643.87px;top:490.00px;font-size:18.9px;color:#fff;letter-spacing:-0.333px;transform:scaleX(0.9300);">Back</span>
<span class="t" style="left:1688.60px;top:490.00px;font-size:18.9px;color:#fff;letter-spacing:-0.301px;transform:scaleX(0.9300);">to</span>
<span class="t" style="left:1710.37px;top:490.00px;font-size:18.9px;color:#fff;letter-spacing:-0.156px;transform:scaleX(0.9300);">Plans</span>
<span class="t" style="left:161.57px;top:554.00px;font-size:28.85px;color:#212529;letter-spacing:0.000px;transform:scaleX(1.0321);-webkit-text-stroke:0.9px #212529;">Plan</span>
<span class="t" style="left:231.92px;top:554.00px;font-size:28.85px;color:#212529;letter-spacing:0.000px;transform:scaleX(1.0782);-webkit-text-stroke:0.9px #212529;">Details</span>
<span class="t" style="left:161.80px;top:1005.00px;font-size:28.85px;color:#212529;letter-spacing:-0.511px;transform:scaleX(0.9300);-webkit-text-stroke:0.9px #212529;">CTL</span>
<span class="t" style="left:222.07px;top:1005.00px;font-size:28.85px;color:#212529;letter-spacing:0.000px;transform:scaleX(0.8667);-webkit-text-stroke:0.9px #212529;">–</span>
<span class="t" style="left:247.20px;top:1005.00px;font-size:28.85px;color:#212529;letter-spacing:-0.000px;transform:scaleX(1.0087);-webkit-text-stroke:0.9px #212529;">Cut</span>
<span class="t" style="left:305.00px;top:1005.00px;font-size:28.85px;color:#212529;letter-spacing:0.091px;transform:scaleX(1.1000);-webkit-text-stroke:0.9px #212529;">to</span>
<span class="t" style="left:342.90px;top:1005.00px;font-size:28.85px;color:#212529;letter-spacing:0.000px;transform:scaleX(1.0977);-webkit-text-stroke:0.9px #212529;">Length</span>
<span class="t" style="left:146.95px;top:628.00px;font-size:16px;color:#212529;letter-spacing:0.000px;transform:scaleX(1.0490);">Plan ID</span>
<span class="t" style="left:688.66px;top:628.00px;font-size:16px;color:#212529;letter-spacing:0.000px;transform:scaleX(1.0364);">Status</span>
<span class="t" style="left:1231.00px;top:628.00px;font-size:16px;color:#212529;letter-spacing:0.000px;transform:scaleX(1.0670);">Client Name</span>
<span class="t" style="left:148.00px;top:696.00px;font-size:16px;color:#212529;letter-spacing:0.000px;transform:scaleX(0.9921);">CRR No.</span>
<span class="t" style="left:689.70px;top:696.00px;font-size:16px;color:#212529;letter-spacing:0.000px;transform:scaleX(1.0159);">Grade</span>
<span class="t" style="left:1229.91px;top:696.00px;font-size:16px;color:#212529;letter-spacing:0.000px;transform:scaleX(1.0854);">Inward Code</span>
<span class="t" style="left:148.00px;top:764.00px;font-size:16px;color:#212529;letter-spacing:0.000px;transform:scaleX(1.0947);">Coil Width (mm)</span>
<span class="t" style="left:554.30px;top:764.00px;font-size:16px;color:#212529;letter-spacing:0.000px;transform:scaleX(1.0982);">Cutted Coil Width (mm)</span>
<span class="t" style="left:960.60px;top:764.00px;font-size:16px;color:#212529;letter-spacing:-0.000px;transform:scaleX(1.0398);">Thickness (mm)</span>
<span class="t" style="left:1365.72px;top:764.00px;font-size:16px;color:#212529;letter-spacing:0.000px;transform:scaleX(1.0827);">Density</span>
<span class="t" style="left:152.02px;top:832.00px;font-size:16px;color:#212529;letter-spacing:0.000px;transform:scaleX(1.0786);">Net Weight (TON)</span>
<span class="t" style="left:148.00px;top:900.00px;font-size:16px;color:#212529;letter-spacing:-0.000px;transform:scaleX(1.0519);">Coil Bal. Weight (TON)</span>
<span class="t" style="left:554.30px;top:900.00px;font-size:16px;color:#212529;letter-spacing:0.000px;transform:scaleX(1.0173);">CRS Bal. Weight (TON)</span>
<span class="t" style="left:960.60px;top:900.00px;font-size:16px;color:#212529;letter-spacing:-0.000px;transform:scaleX(1.0280);">CTL Bal. Weight (TON)</span>
<span class="t" style="left:158.80px;top:660.00px;font-size:16px;color:#212529;letter-spacing:0.000px;transform:scaleX(0.8889);">2</span>
<span class="t" style="left:699.82px;top:660.00px;font-size:16px;color:#212529;letter-spacing:0.000px;transform:scaleX(1.0769);">N/A</span>
<span class="t" style="left:1241.40px;top:660.00px;font-size:16px;color:#212529;letter-spacing:0.000px;transform:scaleX(0.9971);">Hero</span>
<span class="t" style="left:158.80px;top:728.00px;font-size:16px;color:#212529;letter-spacing:-0.012px;transform:scaleX(0.9300);">CRRAA00005</span>
<span class="t" style="left:700.40px;top:728.00px;font-size:16px;color:#212529;letter-spacing:-1.247px;transform:scaleX(0.9300);">GRP</span>
<span class="t" style="left:1241.40px;top:728.00px;font-size:16px;color:#212529;letter-spacing:0.000px;transform:scaleX(0.9976);">INW000004</span>
<span class="t" style="left:158.23px;top:796.00px;font-size:16px;color:#212529;letter-spacing:0.000px;transform:scaleX(0.9718);">1,250</span>
<span class="t" style="left:564.74px;top:796.00px;font-size:16px;color:#212529;letter-spacing:0.000px;transform:scaleX(0.9562);">134.00</span>
<span class="t" style="left:971.37px;top:796.00px;font-size:16px;color:#212529;letter-spacing:0.000px;transform:scaleX(0.9333);">1.00</span>
<span class="t" style="left:1377.80px;top:796.00px;font-size:16px;color:#212529;letter-spacing:0.000px;transform:scaleX(0.9419);">2.90</span>
<span class="t" style="left:163.65px;top:865.00px;font-size:16px;color:#212529;letter-spacing:0.000px;transform:scaleX(0.9542);">15.000</span>
<span class="t" style="left:158.90px;top:933.00px;font-size:16px;color:#0d6efd;letter-spacing:0.000px;transform:scaleX(1.0225);font-weight:700;">0.408</span>
<span class="t" style="left:565.00px;top:933.00px;font-size:16px;color:#0d6efd;letter-spacing:0.000px;transform:scaleX(1.0225);font-weight:700;">0.000</span>
<span class="t" style="left:971.80px;top:933.00px;font-size:16px;color:#0d6efd;letter-spacing:0.000px;transform:scaleX(1.0125);font-weight:700;">0.000</span>
<span class="t" style="left:179.80px;top:1097.00px;font-size:20px;color:#212529;letter-spacing:-0.575px;transform:scaleX(0.9300);font-weight:700;">CTL</span>
<span class="t" style="left:221.95px;top:1097.00px;font-size:20px;color:#212529;letter-spacing:0.000px;transform:scaleX(0.9519);font-weight:700;">Process</span>
<span class="t" style="left:302.76px;top:1097.00px;font-size:20px;color:#212529;letter-spacing:0.000px;transform:scaleX(1.0386);font-weight:700;">Details:</span>
<span class="t" style="left:179.90px;top:1127.00px;font-size:20px;color:#212529;letter-spacing:0.000px;transform:scaleX(1.1000);">-</span>
<span class="t" style="left:194.23px;top:1127.00px;font-size:20px;color:#212529;letter-spacing:0.000px;transform:scaleX(0.9676);">Process</span>
<span class="t" style="left:271.90px;top:1127.00px;font-size:20px;color:#212529;letter-spacing:0.000px;transform:scaleX(0.9771);">Type:</span>
<span class="t" style="left:325.77px;top:1127.00px;font-size:20px;color:#212529;letter-spacing:-0.919px;transform:scaleX(0.9300);">CTL</span>
<span class="t" style="left:179.19px;top:1157.00px;font-size:20px;color:#212529;letter-spacing:0.000px;transform:scaleX(1.0143);font-weight:700;">Bal.</span>
<span class="t" style="left:223.70px;top:1157.00px;font-size:20px;color:#212529;letter-spacing:0.000px;transform:scaleX(1.0542);font-weight:700;">Weight:</span>
<span class="t" style="left:307.50px;top:1157.00px;font-size:20px;color:#0d6efd;letter-spacing:0.000px;transform:scaleX(1.0620);font-weight:700;">0.000</span>
<span class="t" style="left:368.60px;top:1157.00px;font-size:20px;color:#212529;letter-spacing:0.000px;transform:scaleX(0.9390);">TON</span>
<div class="abs" style="left:160px;top:1200px;width:116px;height:60px;overflow:hidden"><span class="t" style="left:10.10px;top:28.00px;font-size:16px;color:#212529;letter-spacing:0.230px;transform:scaleX(1.0300);font-weight:700;">Dep. Cut (mm)</span></div>
<span class="t" style="left:288.20px;top:1228.00px;font-size:16px;color:#212529;letter-spacing:0.000px;transform:scaleX(1.0701);font-weight:700;">Length (mm)</span>
<span class="t" style="left:439.70px;top:1228.00px;font-size:16px;color:#212529;letter-spacing:0.000px;transform:scaleX(1.0259);font-weight:700;">Qty</span>
<div class="abs" style="left:513px;top:1200px;width:132px;height:60px;overflow:hidden"><span class="t" style="left:11.00px;top:28.00px;font-size:16px;color:#212529;letter-spacing:0.230px;transform:scaleX(1.0300);font-weight:700;">Prod. Weight (TON)</span></div>
<span class="t" style="left:664.00px;top:1228.00px;font-size:16px;color:#212529;letter-spacing:0.000px;transform:scaleX(1.0663);font-weight:700;">Current Qty</span>
<div class="abs" style="left:779px;top:1200px;width:131px;height:60px;overflow:hidden"><span class="t" style="left:9.70px;top:28.00px;font-size:16px;color:#212529;letter-spacing:0.230px;transform:scaleX(1.0300);font-weight:700;">Current Weight (TON)</span></div>
<div class="abs" style="left:911px;top:1200px;width:132px;height:60px;overflow:hidden"><span class="t" style="left:11.10px;top:28.00px;font-size:16px;color:#212529;letter-spacing:0.230px;transform:scaleX(1.0300);font-weight:700;">Bal. Weight (TON)</span></div>
<span class="t" style="left:1054.70px;top:1228.00px;font-size:16px;color:#212529;letter-spacing:-0.000px;transform:scaleX(1.0646);font-weight:700;">Declare Balance Weight</span>
<span class="t" style="left:1293.60px;top:1228.00px;font-size:16px;color:#212529;letter-spacing:0.000px;transform:scaleX(1.0050);font-weight:700;">Packets</span>
<div class="abs" style="left:1398px;top:1200px;width:146px;height:60px;overflow:hidden"><span class="t" style="left:10.30px;top:28.00px;font-size:16px;color:#212529;letter-spacing:0.230px;transform:scaleX(1.0300);font-weight:700;">Quantity per Packet</span></div>
<span class="t" style="left:1591.00px;top:1228.00px;font-size:16px;color:#212529;letter-spacing:0.000px;transform:scaleX(1.0528);font-weight:700;">Packet Details</span>
<span class="t" style="left:192.18px;top:1280.00px;font-size:16px;color:#212529;letter-spacing:0.000px;transform:scaleX(1.0188);">134.00</span>
<span class="t" style="left:303.37px;top:1280.00px;font-size:16px;color:#212529;letter-spacing:0.000px;transform:scaleX(1.0311);">1,250.00</span>
<span class="t" style="left:435.60px;top:1280.00px;font-size:16px;color:#212529;letter-spacing:0.000px;transform:scaleX(1.0000);">2470</span>
<span class="t" style="left:558.49px;top:1280.00px;font-size:16px;color:#212529;letter-spacing:-0.000px;transform:scaleX(1.0103);">1.200</span>
<span class="t" style="left:667.30px;top:1280.00px;font-size:16px;color:#212529;letter-spacing:0.000px;transform:scaleX(0.9389);">2470</span>
<span class="t" style="left:823.80px;top:1280.00px;font-size:16px;color:#212529;letter-spacing:0.000px;transform:scaleX(1.0050);">0.000</span>
<span class="t" style="left:957.00px;top:1280.00px;font-size:16px;color:#212529;letter-spacing:0.000px;transform:scaleX(0.9950);">0.000</span>
<span class="t" style="left:1136.97px;top:1280.00px;font-size:16px;color:#212529;letter-spacing:-0.142px;transform:scaleX(0.9300);">Scrap</span>
<span class="t" style="left:1271.80px;top:1280.00px;font-size:16px;color:#212529;letter-spacing:0.000px;transform:scaleX(0.8444);">5</span>
<span class="t" style="left:1419.60px;top:1280.00px;font-size:16px;color:#212529;letter-spacing:-0.167px;transform:scaleX(0.9300);">500</span>
<span class="t" style="left:1602.20px;top:1272.00px;font-size:14.5px;color:#212529;letter-spacing:0.000px;transform:scaleX(1.0425);">4 packets of 500</span>
<span class="t" style="left:1605.65px;top:1288.00px;font-size:14.5px;color:#212529;letter-spacing:0.000px;transform:scaleX(1.0480);">1 packet of 470</span>
<span class="t" style="left:404.30px;top:1332.00px;font-size:16px;color:#212529;letter-spacing:0.000px;transform:scaleX(1.0595);font-weight:700;">Total</span>
<span class="t" style="left:933.50px;top:1332.00px;font-size:16px;color:#212529;letter-spacing:0.000px;transform:scaleX(1.0750);font-weight:700;">0.000</span>
<span class="t" style="left:783.90px;top:1543.00px;font-size:18.9px;color:#212529;letter-spacing:0.000px;transform:scaleX(0.9926);">Copyright</span>
<span class="t" style="left:871.70px;top:1543.00px;font-size:18.9px;color:#212529;letter-spacing:0.000px;transform:scaleX(1.0071);">©</span>
<span class="t" style="left:892.07px;top:1543.00px;font-size:18.9px;color:#212529;letter-spacing:0.000px;transform:scaleX(0.9317);">2017</span>
<span class="t" style="left:938.20px;top:1543.00px;font-size:18.9px;color:#212529;letter-spacing:0.000px;transform:scaleX(0.7000);">|</span>
<span class="t" style="left:949.20px;top:1543.00px;font-size:18.9px;color:#212529;letter-spacing:-0.504px;transform:scaleX(0.9300);">goldSQUIRREL</span>
<span class="t" style="left:1073.10px;top:1543.00px;font-size:18.9px;color:#212529;letter-spacing:0.000px;transform:scaleX(1.0000);">Studio</span>
</body>
</html>
